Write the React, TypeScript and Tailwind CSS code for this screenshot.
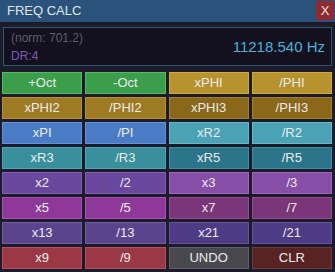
import React from 'react';

// button palette: bg + lighter 1px edge, matches the calculator rows
const buttons: { label: string; cls: string }[] = [
  { label: '+Oct', cls: 'bg-[#3a9e4a] border-[#56b865]' },
  { label: '-Oct', cls: 'bg-[#3a9e4a] border-[#56b865]' },
  { label: 'xPHI', cls: 'bg-[#b6932c] border-[#cca945]' },
  { label: '/PHI', cls: 'bg-[#b6932c] border-[#cca945]' },
  { label: 'xPHI2', cls: 'bg-[#9e7a22] border-[#b6913a]' },
  { label: '/PHI2', cls: 'bg-[#9e7a22] border-[#b6913a]' },
  { label: 'xPHI3', cls: 'bg-[#8a6719] border-[#a27f30]' },
  { label: '/PHI3', cls: 'bg-[#8a6719] border-[#a27f30]' },
  { label: 'xPI', cls: 'bg-[#4a7cc6] border-[#6592d8]' },
  { label: '/PI', cls: 'bg-[#4a7cc6] border-[#6592d8]' },
  { label: 'xR2', cls: 'bg-[#4aa2b6] border-[#66b8ca]' },
  { label: '/R2', cls: 'bg-[#4aa2b6] border-[#66b8ca]' },
  { label: 'xR3', cls: 'bg-[#398f9c] border-[#52a6b2]' },
  { label: '/R3', cls: 'bg-[#398f9c] border-[#52a6b2]' },
  { label: 'xR5', cls: 'bg-[#2a758a] border-[#418ca0]' },
  { label: '/R5', cls: 'bg-[#2a758a] border-[#418ca0]' },
  { label: 'x2', cls: 'bg-[#6a479e] border-[#825eb6]' },
  { label: '/2', cls: 'bg-[#6a479e] border-[#825eb6]' },
  { label: 'x3', cls: 'bg-[#874ea8] border-[#9f66c0]' },
  { label: '/3', cls: 'bg-[#874ea8] border-[#9f66c0]' },
  { label: 'x5', cls: 'bg-[#8e389a] border-[#a651b2]' },
  { label: '/5', cls: 'bg-[#8e389a] border-[#a651b2]' },
  { label: 'x7', cls: 'bg-[#7a3678] border-[#924e90]' },
  { label: '/7', cls: 'bg-[#7a3678] border-[#924e90]' },
  { label: 'x13', cls: 'bg-[#5a448e] border-[#725ca6]' },
  { label: '/13', cls: 'bg-[#5a448e] border-[#725ca6]' },
  { label: 'x21', cls: 'bg-[#4e3b86] border-[#66539e]' },
  { label: '/21', cls: 'bg-[#4e3b86] border-[#66539e]' },
  { label: 'x9', cls: 'bg-[#9a3846] border-[#b2505e]' },
  { label: '/9', cls: 'bg-[#9a3846] border-[#b2505e]' },
  { label: 'UNDO', cls: 'bg-[#48484e] border-[#606066]' },
  { label: 'CLR', cls: 'bg-[#582323] border-[#70393a]' },
];

export default function App() {
  return (
    <div className="w-[335px] h-[272px] bg-[#1c1b29] overflow-hidden" style={{ fontFamily: '"Liberation Sans", Arial, sans-serif' }}>
      {/* title bar */}
      <div className="h-[22px] bg-[#2b527b] flex items-start justify-between">
        <span className="pl-[7px] pt-[4px] text-[13px] leading-[14px] text-[#dfe6ee]">FREQ CALC</span>
        <button className="w-[18px] h-[19px] mt-px mr-px bg-[#8d2b30] text-[#f0e0e0] text-[13px] leading-[19px] text-center">
          X
        </button>
      </div>

      {/* display */}
      <div className="mx-[3px] mt-[5px] h-[39px] border border-[#2c5578] bg-[#12111d] flex items-center justify-between pl-[7px] pr-[6px]">
        <div className="flex flex-col">
          <span className="text-[12px] leading-[14px] text-[#5e5d6e]">(norm: 701.2)</span>
          <span className="mt-[4px] text-[12px] leading-[14px] text-[#8458b8]">DR:4</span>
        </div>
        <span className="text-[15px] leading-[16px] text-[#49b3dc] mt-[1px]">11218.540 Hz</span>
      </div>

      {/* keypad */}
      <div className="mt-[6px] pl-[2px] pr-[3px] grid grid-cols-4 gap-[3px]">
        {buttons.map((b) => (
          <button
            key={b.label}
            className={`h-[22px] border ${b.cls} text-[13px] leading-[20px] text-[#ececec] text-center`}
          >
            {b.label}
          </button>
        ))}
      </div>
    </div>
  );
}
